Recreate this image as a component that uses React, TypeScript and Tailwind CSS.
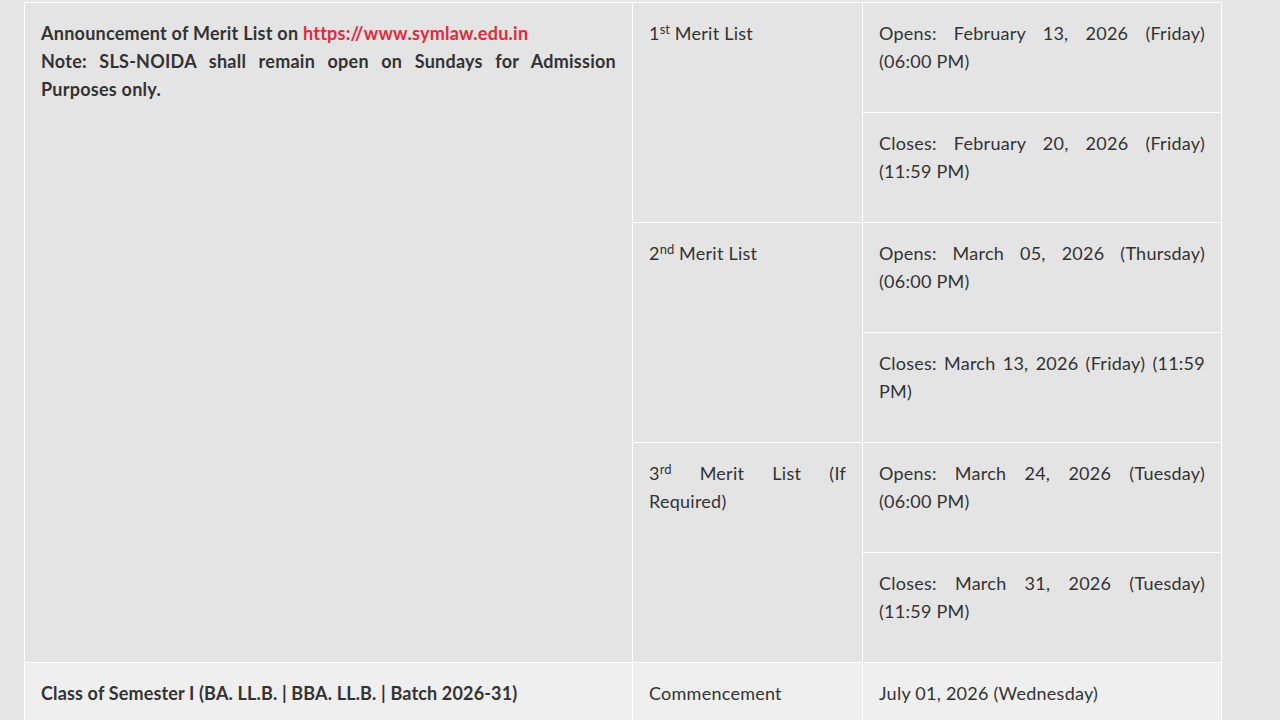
import React from 'react';

interface MeritRow {
  readonly num: string;
  readonly suffix: string;
  readonly label: string;
  readonly opens: string;
  readonly closes: string;
}

const MERIT_ROWS: readonly MeritRow[] = [
  {
    num: '1',
    suffix: 'st',
    label: 'Merit List',
    opens: 'Opens: February 13, 2026 (Friday) (06:00 PM)',
    closes: 'Closes: February 20, 2026 (Friday) (11:59 PM)',
  },
  {
    num: '2',
    suffix: 'nd',
    label: 'Merit List',
    opens: 'Opens: March 05, 2026 (Thursday) (06:00 PM)',
    closes: 'Closes: March 13, 2026 (Friday) (11:59 PM)',
  },
  {
    num: '3',
    suffix: 'rd',
    label: 'Merit List (If Required)',
    opens: 'Opens: March 24, 2026 (Tuesday) (06:00 PM)',
    closes: 'Closes: March 31, 2026 (Tuesday) (11:59 PM)',
  },
];

const cell = 'border border-white align-top text-justify px-4';
const dateCell = `${cell} pt-4 h-[110px]`;

export default function App() {
  return (
    <div
      className="min-h-screen bg-[#e6e6e6] pt-[2px] text-[18px] leading-[28px] tracking-[0.25px] text-[#333333]"
      style={{ fontFamily: 'Lato, "Open Sans", sans-serif' }}
    >
      <table className="ml-6 w-[1197px] table-fixed border-collapse">
        <colgroup>
          <col className="w-[608px]" />
          <col className="w-[230px]" />
          <col className="w-[359px]" />
        </colgroup>
        <tbody className="bg-[#e4e4e4]">
          {MERIT_ROWS.map((row, i) => (
            <React.Fragment key={row.num}>
              <tr>
                {i === 0 && (
                  <td rowSpan={6} className={`${cell} pt-4 font-bold`}>
                    <p>
                      Announcement of Merit List on{' '}
                      <a href="#" className="text-[#e2293b]">
                        https://www.symlaw.edu.in
                      </a>
                    </p>
                    <p>Note: SLS-NOIDA shall remain open on Sundays for Admission Purposes only.</p>
                  </td>
                )}
                <td rowSpan={2} className={`${cell} pt-4`}>
                  <p>
                    {row.num}
                    <sup className="text-[13px] leading-none tracking-normal">{row.suffix}</sup>{' '}
                    {row.label}
                  </p>
                </td>
                <td className={dateCell}>
                  <p>{row.opens}</p>
                </td>
              </tr>
              <tr>
                <td className={dateCell}>
                  <p>{row.closes}</p>
                </td>
              </tr>
            </React.Fragment>
          ))}
          <tr className="bg-[#efefef]">
            <td className={`${cell} pt-4 pb-4 font-bold tracking-[0.15px]`}>
              Class of Semester I (BA. LL.B. | BBA. LL.B. | Batch 2026-31)
            </td>
            <td className={`${cell} pt-4 pb-4`}>Commencement</td>
            <td className={`${cell} pt-4 pb-4`}>July 01, 2026 (Wednesday)</td>
          </tr>
        </tbody>
      </table>
    </div>
  );
}
